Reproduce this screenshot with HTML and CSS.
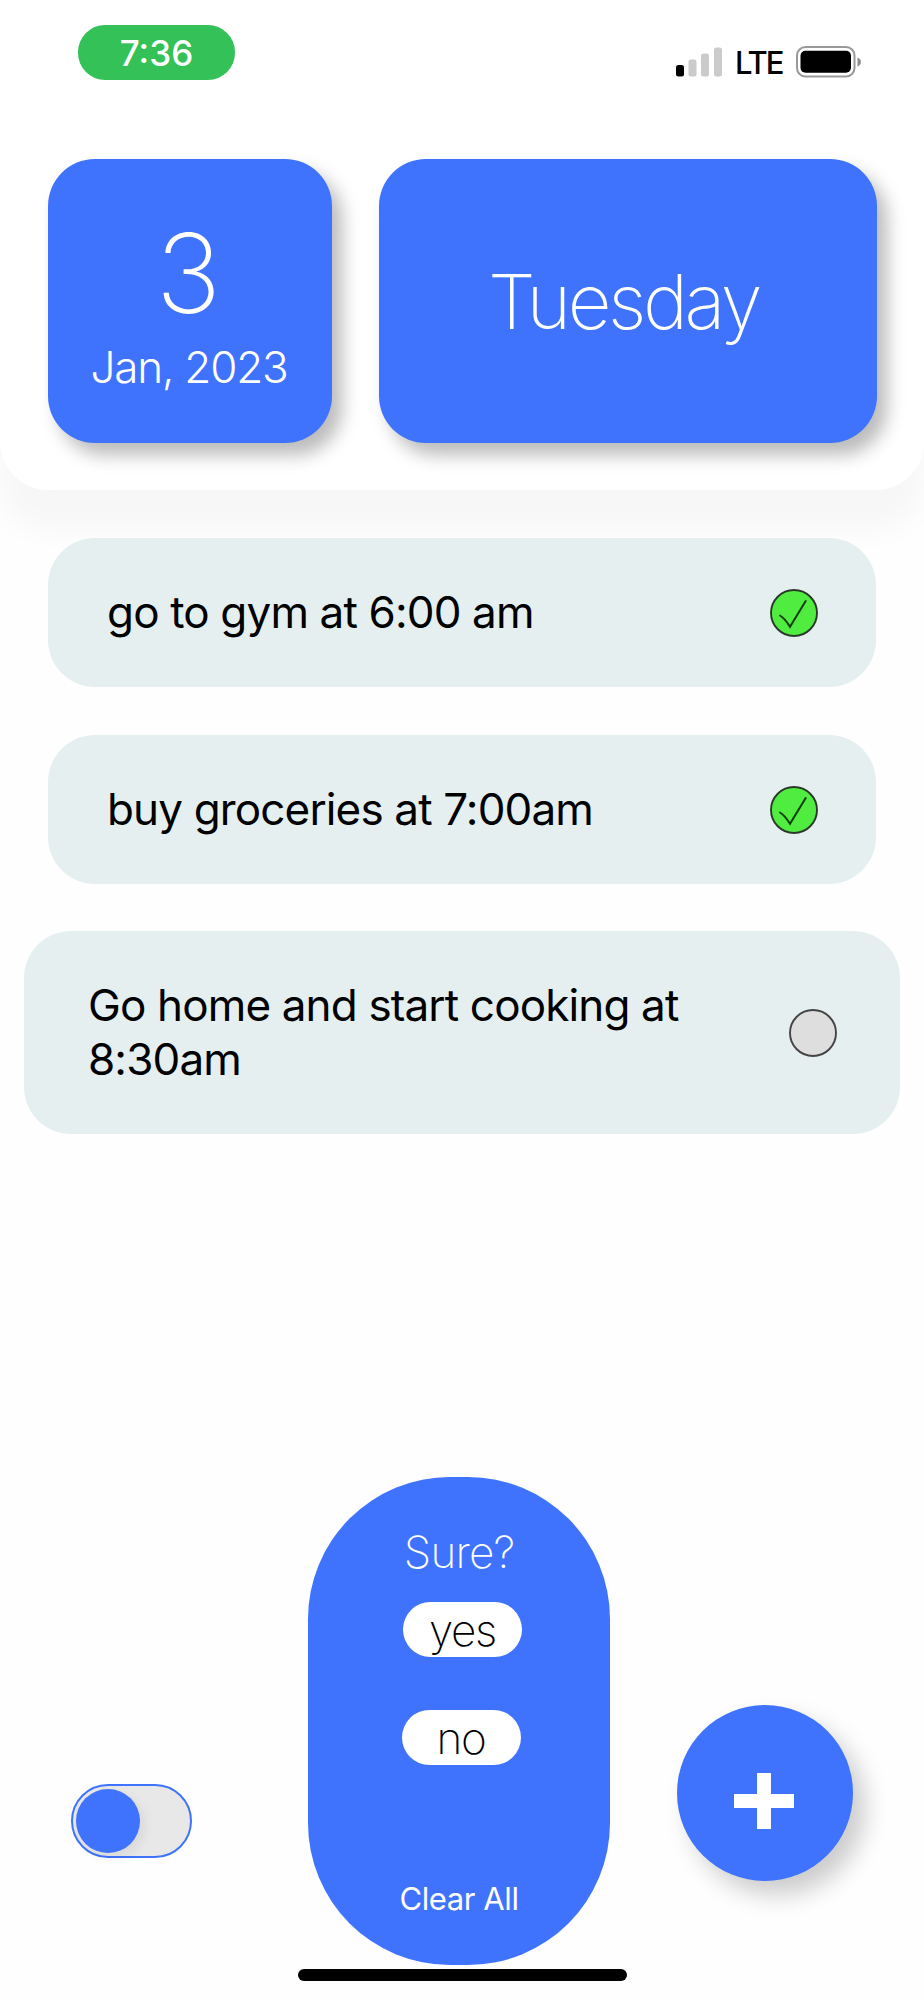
FILE: index.html
```
<!DOCTYPE html>
<html lang="en">
<head>
<meta charset="utf-8">
<title>Todo</title>
<link rel="stylesheet" href="styles.css">
</head>
<body>

<div class="header">
    <div class="status-bar">
        <div class="clock">7:36</div>
        <div class="status-icons">
            <svg class="signal" width="46" height="30" viewBox="0 0 46 30">
                <rect x="0" y="18" width="8" height="11.5" rx="2.5" fill="#000"/>
                <rect x="12.5" y="12.5" width="8" height="17" rx="2.5" fill="#cbcbcb"/>
                <rect x="25" y="6.5" width="8" height="23" rx="2.5" fill="#cbcbcb"/>
                <rect x="38" y="0.5" width="8" height="29" rx="2.5" fill="#cbcbcb"/>
            </svg>
            <span class="network">LTE</span>
            <svg class="battery" width="66" height="32" viewBox="0 0 66 32">
                <rect x="1" y="1" width="57.5" height="29.5" rx="8.5" fill="none" stroke="#999" stroke-width="2"/>
                <rect x="4.5" y="4.8" width="50.5" height="22" rx="5" fill="#000"/>
                <path d="M61.5 11.5 C66 13 66 19 61.5 20.5 Z" fill="#8c8c8c"/>
            </svg>
        </div>
    </div>
    <div class="cards">
        <div class="card date-card">
            <div class="day">3</div>
            <div class="month">Jan, 2023</div>
        </div>
        <div class="card week-card">
            <span class="weekday">Tuesday</span>
        </div>
    </div>
</div>

<div class="list">
    <div class="item">
        <span class="task">go to gym at 6:00 am</span>
        <svg class="check" viewBox="0 0 48 48">
            <circle cx="24" cy="24" r="23" fill="#50ec40" stroke="#2a3a2a" stroke-width="1.9"/>
            <path d="M10 26.500 Q15 29.500 20 37.800 L35.700 12" fill="none" stroke="#123d10" stroke-width="2" stroke-linecap="round"/>
        </svg>
    </div>
    <div class="item">
        <span class="task">buy groceries at 7:00am</span>
        <svg class="check" viewBox="0 0 48 48">
            <circle cx="24" cy="24" r="23" fill="#50ec40" stroke="#2a3a2a" stroke-width="1.9"/>
            <path d="M10 26.500 Q15 29.500 20 37.800 L35.700 12" fill="none" stroke="#123d10" stroke-width="2" stroke-linecap="round"/>
        </svg>
    </div>
    <div class="item wide">
        <span class="task">Go home and start cooking at<br>8:30am</span>
        <svg class="check" viewBox="0 0 48 48">
            <circle cx="24" cy="24" r="23" fill="#dedede" stroke="#444" stroke-width="1.9"/>
        </svg>
    </div>
</div>

<div class="footer">
    <div class="toggle"><div class="knob"></div></div>
    <div class="clear-panel">
        <div class="sure">Sure?</div>
        <button class="choice yes">yes</button>
        <button class="choice no">no</button>
        <div class="clear">Clear All</div>
    </div>
    <button class="add">
        <svg width="60" height="56" viewBox="0 0 60 56">
            <path d="M23 0H37V21H60V35H37V56H23V35H0V21H23Z" fill="#fff"/>
        </svg>
    </button>
</div>
<div class="home-bar"></div>

</body>
</html>
```
FILE: styles.css
```
* { box-sizing: border-box; }
body { margin: 0; height: 2000px; display: flex; flex-direction: column; overflow: hidden; font-family: Inter, sans-serif; background: #fefefe; color: #000; }
button { border: none; padding: 0; font-family: inherit; }

.header { height: 490px; border-radius: 0 0 48px 48px; background: #fff; box-shadow: 0 40px 30px rgba(0,0,0,0.03); }
.status-bar { height: 159px; padding: 25px 62px 0 78px; display: flex; justify-content: space-between; align-items: flex-start; }
.clock { width: 157px; height: 55px; border-radius: 27px; background: #34c157; color: #fff; font-size: 35px; font-weight: 500; line-height: 56px; text-align: center; }
.status-icons { display: flex; align-items: center; margin-top: 21px; height: 31px; }
.network { width: 47px; margin: 1px 14px 0 13px; font-size: 31px; line-height: 31px; font-weight: 500; letter-spacing: -2px; }

.cards { display: flex; gap: 47px; padding: 0 47px 0 48px; }
.card { height: 284px; border-radius: 47px; background: #3f73fd; color: #fff; box-shadow: 10px 12px 18px rgba(0,0,0,0.27); }
.date-card { width: 284px; padding-top: 59px; text-align: center; }
.day { padding-right: 3px; font-size: 110px; font-weight: 200; line-height: 110px; }
.month { margin-top: 11px; padding-right: 2px; font-size: 44px; font-weight: 300; line-height: 56px; letter-spacing: -1.2px; }
.week-card { width: 498px; padding-right: 9px; display: flex; align-items: center; justify-content: center; }
.weekday { font-size: 76px; font-weight: 200; line-height: 90px; letter-spacing: -3.4px; }

.list { display: flex; flex-direction: column; gap: 48px; padding: 48px 48px 0; }
.item { height: 149px; padding: 0 58px 0 59px; border-radius: 47px; background: #e5efef; display: flex; align-items: center; justify-content: space-between; }
.item.wide { height: 203px; margin: -1px -24px 0; padding: 0 63px 0 64px; }
.task { padding-bottom: 1px; font-size: 44px; line-height: 54px; letter-spacing: -0.85px; white-space: nowrap; }
.check { width: 48px; height: 48px; flex-shrink: 0; }

.footer { margin-top: auto; display: flex; align-items: flex-end; height: 488px; padding-left: 71px; }
.toggle { width: 121px; height: 74px; margin-bottom: 107px; padding: 3px; border: 2px solid #3f73fd; border-radius: 37px; background: #e8e8e8; }
.knob { width: 64px; height: 64px; border-radius: 50%; background: #3f73fd; box-shadow: 4px 4px 12px rgba(0,0,0,0.08); }
.clear-panel { width: 302px; height: 488px; margin-left: 116px; border-radius: 142px; background: #3f73fd; color: #fff; display: flex; flex-direction: column; align-items: center; }
.sure { margin-top: 48px; font-size: 44px; font-weight: 200; line-height: 54px; letter-spacing: -0.8px; }
.choice { width: 119px; height: 55px; border-radius: 28px; background: #fff; color: #000; font-size: 44px; font-weight: 200; line-height: 57px; letter-spacing: -1.3px; }
.yes { margin: 23px 0 0 7px; }
.no { margin: 53px 0 0 4px; }
.clear { margin-top: 113px; font-size: 31px; line-height: 42px; letter-spacing: -0.4px; }
.add { width: 176px; height: 176px; margin: 0 0 84px 67px; padding: 16px 2px 0 0; border-radius: 50%; background: #3f73fd; box-shadow: 12px 14px 24px rgba(0,0,0,0.2); display: flex; align-items: center; justify-content: center; }
.home-bar { width: 329px; height: 12px; margin: 4px 0 19px 298px; border-radius: 6px; background: #000; flex-shrink: 0; }
```
